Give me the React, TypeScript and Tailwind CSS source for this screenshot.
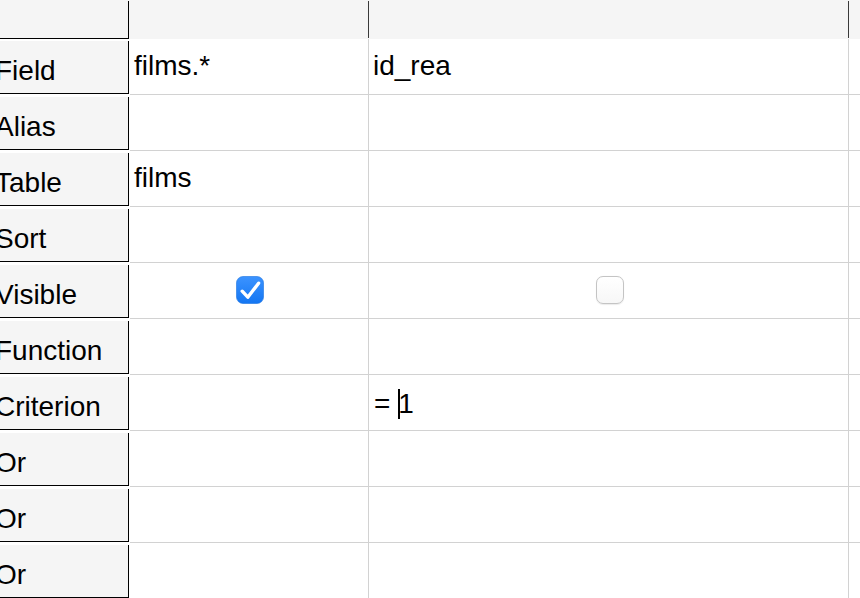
import React from "react";

type Row = {
  label: string;
  cells: [React.ReactNode, React.ReactNode];
};

const CheckedBox = () => (
  <svg width="28" height="28" viewBox="0 0 28 28">
    <defs>
      <linearGradient id="cbBlue" x1="0" y1="0" x2="0" y2="1">
        <stop offset="0" stopColor="#3b93ff" />
        <stop offset="1" stopColor="#1476f2" />
      </linearGradient>
    </defs>
    <rect x="0.5" y="0.5" width="27" height="27" rx="6.5" fill="url(#cbBlue)" stroke="#1a72e0" strokeWidth="0.6" />
    <path
      d="M6.2 15.2 L11.8 21.2 L22.6 7.2"
      fill="none"
      stroke="#ffffff"
      strokeWidth="3.4"
      strokeLinecap="round"
      strokeLinejoin="round"
    />
  </svg>
);

const EmptyBox = () => (
  <div className="w-[28px] h-[28px] rounded-[7px] border border-[#c4c4c4] bg-gradient-to-b from-white to-[#f7f7f7] shadow-[0_0.5px_1px_rgba(0,0,0,0.08)]" />
);

const Text = ({ children }: { children: React.ReactNode }) => (
  <div className="pt-[11px] pl-[4px] leading-[32px] whitespace-nowrap">{children}</div>
);

const rows: Row[] = [
  { label: "Field", cells: [<Text>films.*</Text>, <Text>id_rea</Text>] },
  { label: "Alias", cells: [null, null] },
  { label: "Table", cells: [<Text>films</Text>, null] },
  { label: "Sort", cells: [null, null] },
  {
    label: "Visible",
    cells: [
      <div className="h-full flex items-center justify-center pb-px pl-[2px]">
        <CheckedBox />
      </div>,
      <div className="h-full flex items-center justify-center pb-px pl-[2px]">
        <EmptyBox />
      </div>,
    ],
  },
  { label: "Function", cells: [null, null] },
  {
    label: "Criterion",
    cells: [
      null,
      <div className="pt-[13px] pl-[5px] leading-[32px] whitespace-nowrap flex items-center">
        <span>=&nbsp;</span>
        <span className="inline-block w-[2px] h-[30px] bg-black -mr-[2px] relative z-10" />
        <span>1</span>
      </div>,
    ],
  },
  { label: "Or", cells: [null, null] },
  { label: "Or", cells: [null, null] },
  { label: "Or", cells: [null, null] },
];

export default function App() {
  return (
    <div className="w-[860px] h-[598px] overflow-hidden bg-white text-black text-[28px] font-['Liberation_Sans',Arial,sans-serif]">
      {/* Column header row */}
      <div className="flex h-[39px] bg-[#f5f5f5]">
        <div className="w-[130px] shrink-0 pr-px">
          <div className="h-[38px] mt-px border-r border-b border-black" />
        </div>
        <div className="w-[239px] shrink-0 flex justify-end">
          <div className="w-px h-[37px] mt-px bg-[#3a3a3a]" />
        </div>
        <div className="w-[480px] shrink-0 flex justify-end">
          <div className="w-px h-[37px] mt-px bg-[#3a3a3a]" />
        </div>
        <div className="flex-1" />
      </div>

      {/* Design rows */}
      {rows.map((row, i) => (
        <div key={i} className="flex h-[56px]">
          <div className="w-[130px] shrink-0 pr-px">
            <div className="mt-[2px] h-[53px] border-r border-b border-black bg-[#f5f5f5] overflow-hidden">
              <div className="-ml-[5px] pt-[14px] leading-[32px] whitespace-nowrap">{row.label}</div>
            </div>
          </div>
          <div className="w-[239px] shrink-0 border-r border-b border-[#d2d2d2]">{row.cells[0]}</div>
          <div className="w-[480px] shrink-0 border-r border-b border-[#d2d2d2]">{row.cells[1]}</div>
          <div className="flex-1 border-b border-[#d2d2d2]" />
        </div>
      ))}
    </div>
  );
}
